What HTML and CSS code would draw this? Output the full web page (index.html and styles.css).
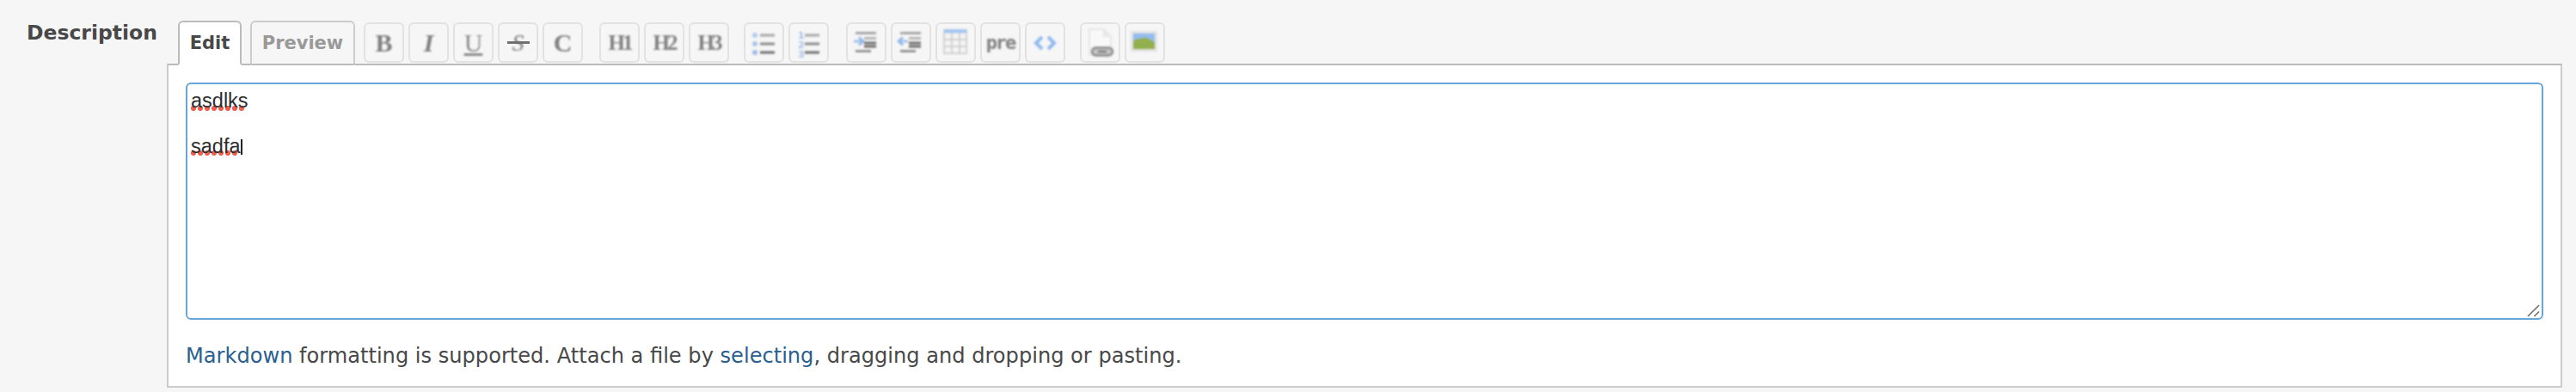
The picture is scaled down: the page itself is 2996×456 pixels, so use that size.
FILE: index.html
```html
<!DOCTYPE html>
<html lang="en">
<head>
  <meta charset="UTF-8" />
  <title>Description editor</title>
  <link rel="stylesheet" href="styles.css">
</head>
<body>

  <div class="field">
    <label class="field-label" for="description">Description</label>

    <div class="editor">
      <div class="editor-top">
        <a class="tab tab-edit active">Edit</a>
        <a class="tab tab-preview">Preview</a>

        <div class="toolbar">
          <div class="tool-group group-format">
            <button class="tool t-bold"><span>B</span></button>
            <button class="tool t-italic"><span>I</span></button>
            <button class="tool t-under"><span>U</span></button>
            <button class="tool t-strike"><span>S</span></button>
            <button class="tool t-bold"><span>C</span></button>
          </div>

          <div class="tool-group group-heads">
            <button class="tool t-head"><span>H1</span></button>
            <button class="tool t-head"><span>H2</span></button>
            <button class="tool t-head"><span>H3</span></button>
          </div>

          <div class="tool-group group-lists">
            <button class="tool">
              <svg class="icon" viewBox="0 0 47 47">
                <circle cx="13" cy="15" r="3" fill="#b4cdf2"/>
                <circle cx="13" cy="25" r="3" fill="#a9c4ee"/>
                <circle cx="13" cy="35" r="3" fill="#9dbcec"/>
                <path d="M19 15h17" stroke="#a8a8a8" stroke-width="3"/>
                <path d="M19 25h17" stroke="#8c8c8c" stroke-width="3"/>
                <path d="M19 35h17" stroke="#707070" stroke-width="3"/>
              </svg>
            </button>
            <button class="tool">
              <svg class="icon" viewBox="0 0 47 47">
                <text class="num" x="11" y="19">1</text>
                <text class="num" x="11" y="30">2</text>
                <text class="num" x="11" y="41">3</text>
                <path d="M19 15h17" stroke="#a8a8a8" stroke-width="3"/>
                <path d="M19 25h17" stroke="#8c8c8c" stroke-width="3"/>
                <path d="M19 35h17" stroke="#707070" stroke-width="3"/>
              </svg>
            </button>
          </div>

          <div class="tool-group group-blocks">
            <button class="tool">
              <svg class="icon" viewBox="0 0 47 47">
                <path d="M11 12.5h24" stroke="#999" stroke-width="2.5"/>
                <path d="M21 18.5h14" stroke="#aaa" stroke-width="2.5"/>
                <path d="M9 22h10" stroke="#a3c2ef" stroke-width="3"/>
                <path d="M15 17.5l5 4.5-5 4.5" fill="none" stroke="#8fb3ea" stroke-width="2.5"/>
                <path d="M21 24h14M21 28h14" stroke="#707070" stroke-width="3"/>
                <path d="M11 33.5h18" stroke="#858585" stroke-width="2.5"/>
              </svg>
            </button>
            <button class="tool">
              <svg class="icon" viewBox="0 0 47 47">
                <path d="M11 12.5h24" stroke="#999" stroke-width="2.5"/>
                <path d="M21 18.5h14" stroke="#aaa" stroke-width="2.5"/>
                <path d="M10 22h10" stroke="#a3c2ef" stroke-width="3"/>
                <path d="M14 17.5l-5 4.5 5 4.5" fill="none" stroke="#8fb3ea" stroke-width="2.5"/>
                <path d="M21 24h14M21 28h14" stroke="#707070" stroke-width="3"/>
                <path d="M11 33.5h18" stroke="#858585" stroke-width="2.5"/>
              </svg>
            </button>
            <button class="tool">
              <svg class="icon" viewBox="0 0 47 47">
                <rect x="10" y="9" width="26" height="27" fill="#f4f4f4" stroke="#c8c8c8" stroke-width="1.5"/>
                <path d="M19 10v26M28 10v26M10 20h26M10 28h26" stroke="#c8c8c8" stroke-width="1.5"/>
                <rect x="10" y="8" width="26" height="4.5" fill="#a5c6f0"/>
              </svg>
            </button>
            <button class="tool t-pre"><span>pre</span></button>
            <button class="tool">
              <svg class="icon" viewBox="0 0 47 47">
                <path d="M20 17l-7 7 7 7M27 17l7 7-7 7" fill="none" stroke="#92baef" stroke-width="4"/>
              </svg>
            </button>
          </div>

          <div class="tool-group group-media">
            <button class="tool">
              <svg class="icon" viewBox="0 0 47 47">
                <path d="M11 8h17l8 8v22H11z" fill="#f8f8f8" stroke="#e2e2e2" stroke-width="1.5"/>
                <path d="M28 8v8h8" fill="#eaeaea" stroke="#e2e2e2" stroke-width="1.5"/>
                <rect x="14" y="29.5" width="24" height="9" rx="4.5" fill="#c4c4c4" stroke="#8c8c8c" stroke-width="2.5"/>
                <path d="M21 34h10" stroke="#808080" stroke-width="2.5"/>
              </svg>
            </button>
            <button class="tool">
              <svg class="icon" viewBox="0 0 47 47">
                <rect x="7" y="10" width="31" height="24" fill="#e2e2e2"/>
                <rect x="10" y="13" width="25" height="18" fill="#93bdf0"/>
                <path d="M10 31v-9c4-3 7-4 10-3 3-2 8-1 15 5v7z" fill="#93b04e"/>
              </svg>
            </button>
          </div>
        </div>
      </div>

      <div class="editor-box">
        <div class="input-wrap">
          <span class="squiggle squiggle-one"></span>
          <span class="squiggle squiggle-two"></span>
          <textarea id="description" class="text-input" spellcheck="false">asdlks

sadfa</textarea>
          <span class="caret"></span>
          <svg class="grip" viewBox="0 0 16 16">
            <path d="M1 15L15 1M9 15l6-6" stroke="#666" stroke-width="1.5"/>
          </svg>
        </div>
        <p class="hint"><a href="#">Markdown</a> formatting is supported. Attach a file by <a href="#">selecting</a>, dragging and dropping or pasting.</p>
      </div>
    </div>
  </div>

</body>
</html>
```

FILE: styles.css
```css
body {
  margin: 0;
  background: #f6f6f6;
  color: #484848;
  font-family: "DejaVu Sans", Verdana, sans-serif;
}

.field {
  display: flex;
  padding: 24px 16px 5px 31px;
}

.field-label {
  width: 163px;
  font-size: 23.5px;
  font-weight: bold;
  line-height: 28px;
}

.editor {
  flex: 1;
}

.editor-top {
  display: flex;
  align-items: flex-end;
  padding-left: 13px;
  height: 50px;
}

.tab {
  box-sizing: border-box;
  height: 52px;
  margin-bottom: -2px;
  margin-right: 10px;
  background: #f6f6f6;
  border: 2px solid #ccc;
  border-bottom: 2px solid #bbb;
  border-radius: 6px 6px 0 0;
  color: #999;
  font-size: 21px;
  font-weight: bold;
  line-height: 48px;
  text-align: center;
  position: relative;
}

.tab-edit { width: 74px; }
.tab-preview { width: 122px; }

.tab.active {
  background: white;
  border-color: #bbb;
  border-bottom-color: white;
  color: #484848;
  z-index: 1;
}

.toolbar {
  display: flex;
}

.tool-group {
  display: flex;
  gap: 5px;
}

.group-heads { margin-left: 19px; }
.group-lists { margin-left: 17px; }
.group-blocks { margin-left: 20px; }
.group-media { margin-left: 17px; }

.tool {
  box-sizing: border-box;
  width: 47px;
  height: 47px;
  margin-bottom: 1px;
  padding: 0;
  background: #f6f6f6;
  border: 2px solid #e2e2e2;
  border-radius: 6px;
  color: #808080;
  font-family: "Liberation Serif", serif;
  font-size: 30px;
  line-height: 1;
}

.tool > * {
  filter: blur(0.9px);
}

.t-bold { font-weight: bold; }
.t-italic { font-style: italic; font-weight: bold; }
.t-under { text-decoration: underline; color: #8a8a8a; }

.t-strike {
  position: relative;
  font-style: italic;
  font-size: 28px;
}

/* the strike runs past the letter on both sides */
.t-strike::after {
  content: "";
  position: absolute;
  left: 9px;
  top: 20px;
  width: 26px;
  height: 3px;
  background: #707070;
  filter: blur(0.5px);
}

.t-head {
  font-size: 25px;
  font-weight: bold;
  letter-spacing: -3px;
}

.t-pre {
  font-family: "DejaVu Sans Mono", monospace;
  font-size: 22px;
  font-weight: bold;
  letter-spacing: -2px;
}

.icon {
  display: block;
  width: 47px;
  height: 47px;
  margin: -2px;
}

.num {
  fill: #a3c2ef;
  font-family: "DejaVu Sans", sans-serif;
  font-size: 11px;
  font-weight: bold;
}

.editor-box {
  box-sizing: border-box;
  height: 377px;
  padding: 20px 20px 0 20px;
  background: white;
  border: 2px solid #ccc;
  border-top-color: #bbb;
}

.input-wrap {
  position: relative;
  height: 276px;
}

.text-input {
  position: relative;
  display: block;
  box-sizing: border-box;
  width: 100%;
  height: 100%;
  margin: 0;
  padding: 6px 4px;
  background: transparent;
  border: 2px solid #66a6d9;
  border-radius: 6px;
  outline: none;
  resize: none;
  color: #2e2e2e;
  font-family: "Liberation Sans", Arial, sans-serif;
  font-size: 23.5px;
  line-height: 26.5px;
}

.squiggle {
  position: absolute;
  left: 6px;
  height: 6px;
  background: radial-gradient(circle at 3px 3px, #ee5f50 2.8px, transparent 3.2px) repeat-x;
  background-size: 8px 6px;
}

.squiggle-one { top: 27px; width: 62px; }
.squiggle-two { top: 79px; width: 54px; }

.caret {
  position: absolute;
  left: 64px;
  top: 66px;
  width: 2px;
  height: 18px;
  background: #222;
}

.grip {
  position: absolute;
  right: 4px;
  bottom: 3px;
  width: 15px;
  height: 15px;
}

.hint {
  margin: 26px 0 0;
  font-size: 24.1px;
  line-height: 32px;
}

.hint a {
  color: #2a5f8f;
  text-decoration: none;
}
```
